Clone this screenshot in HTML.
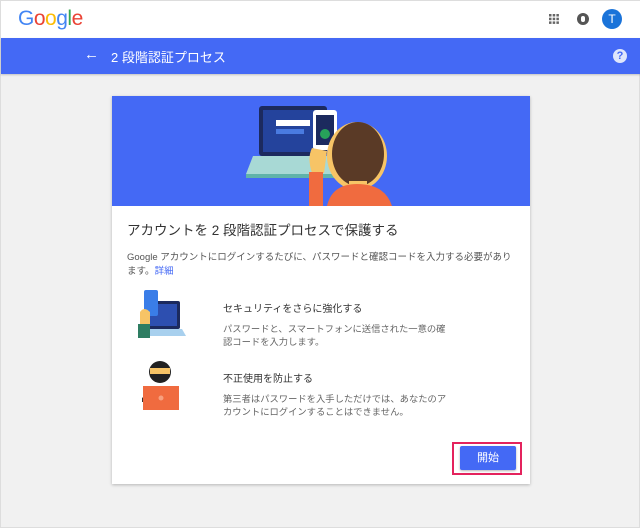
<!DOCTYPE html>
<html><head><meta charset="utf-8"><style>
*{margin:0;padding:0;box-sizing:border-box}
body{width:640px;height:528px;background:#f1f1f1;font-family:"Liberation Sans","Noto Sans CJK JP",sans-serif;position:relative;overflow:hidden;border:1px solid #ddd}
.hdr{position:absolute;left:0;top:0;width:640px;height:37px;background:#fff}
.bar{position:absolute;left:0;top:37px;width:640px;height:36px;background:#4469f5;box-shadow:0 1px 2px rgba(0,0,0,.2)}
.card{position:absolute;left:111px;top:95px;width:418px;height:388px;background:#fff;box-shadow:0 1px 3px rgba(0,0,0,.25)}
.t{position:absolute;white-space:nowrap}
</style></head><body>
<div class="hdr">
<div class="t" style="left:17px;top:6px;font-size:21px;letter-spacing:-0.5px"><span style="color:#4285f4">G</span><span style="color:#ea4335">o</span><span style="color:#fbbc05">o</span><span style="color:#4285f4">g</span><span style="color:#34a853">l</span><span style="color:#ea4335">e</span></div>
<svg style="position:absolute;left:548px;top:13px" width="10" height="10"><g fill="#666"><rect x="0" y="0" width="2.5" height="2.5"/><rect x="3.7" y="0" width="2.5" height="2.5"/><rect x="7.4" y="0" width="2.5" height="2.5"/><rect x="0" y="3.7" width="2.5" height="2.5"/><rect x="3.7" y="3.7" width="2.5" height="2.5"/><rect x="7.4" y="3.7" width="2.5" height="2.5"/><rect x="0" y="7.4" width="2.5" height="2.5"/><rect x="3.7" y="7.4" width="2.5" height="2.5"/><rect x="7.4" y="7.4" width="2.5" height="2.5"/></g></svg>
<div style="position:absolute;left:576px;top:12px;width:12px;height:12px;border-radius:50%;background:#555"><div style="margin:3px 0 0 4px;width:4px;height:6px;border-radius:2px;background:#fff"></div></div>
<div style="position:absolute;left:601px;top:8px;width:20px;height:20px;border-radius:50%;background:#1a73d9;color:#fff;font-size:12px;text-align:center;line-height:20px">T</div>
</div>
<div class="bar">
<div class="t" style="left:83px;top:8px;color:#fff;font-size:15px">←</div>
<div class="t" style="left:110px;top:9px;color:#fff;font-size:13px">2 段階認証プロセス</div>
<div style="position:absolute;left:612px;top:11px;width:14px;height:14px;border-radius:50%;background:#dfe6fb;color:#4469f5;font-size:11px;font-weight:bold;text-align:center;line-height:14px">?</div>
</div>
<div class="card">
<svg width="418" height="110" style="position:absolute;left:0;top:0">
<rect width="418" height="110" fill="#4469f5"/>
<rect x="147" y="10" width="68" height="50" rx="3" fill="#1c2a5e"/>
<rect x="151" y="14" width="60" height="42" fill="#24439c"/>
<rect x="164" y="24" width="34" height="6" fill="#fff"/>
<rect x="164" y="33" width="28" height="5" fill="#4a7be0"/>
<polygon points="141,60 221,60 228,78 134,78" fill="#a8d9d5"/>
<rect x="134" y="78" width="94" height="4" fill="#5fb3aa"/>
<rect x="201" y="14" width="24" height="40" rx="3" fill="#fff"/>
<rect x="204" y="19" width="18" height="30" fill="#1c2a5e"/>
<circle cx="213" cy="38" r="5" fill="#27a35a"/>
<path d="M200 52 q-5 10 0 25 l12 0 l3 -22 z" fill="#f7c466"/>
<rect x="197" y="76" width="14" height="34" fill="#f06b3f"/>
<ellipse cx="245" cy="60" rx="30" ry="34" fill="#f7c466"/>
<ellipse cx="246" cy="58" rx="26" ry="32" fill="#5a3a26"/>
<rect x="237" y="85" width="18" height="10" fill="#f7c466"/>
<path d="M215 110 q5 -22 30 -22 q28 0 35 22 z" fill="#f06b3f"/>
</svg>
<div class="t" style="left:15px;top:123px;font-size:13.5px;color:#333">アカウントを 2 段階認証プロセスで保護する</div>
<div class="t" style="left:15px;top:155px;font-size:9.5px;color:#555;line-height:14px">Google アカウントにログインするたびに、パスワードと確認コードを入力する必要があり<br>ます。<span style="color:#4469f5">詳細</span></div>
<svg width="60" height="60" style="position:absolute;left:22px;top:192px">
<rect x="10" y="13" width="36" height="28" rx="2" fill="#1c2a5e"/><rect x="13" y="16" width="30" height="22" fill="#2d4fb0"/>
<polygon points="8,41 48,41 52,48 4,48" fill="#a8d0ee"/>
<rect x="10" y="2" width="14" height="26" rx="2" fill="#3a7de8"/>
<path d="M6 24 q4 -6 10 0 l0 12 l-10 0 z" fill="#f7c466"/>
<rect x="4" y="36" width="12" height="14" fill="#2e7d62"/>
</svg>
<svg width="60" height="60" style="position:absolute;left:22px;top:262px">
<circle cx="26" cy="14" r="11" fill="#222"/><rect x="16" y="10" width="20" height="6" fill="#f7c466"/>
<path d="M8 40 q18 -16 36 0 v4 h-36z" fill="#333"/>
<rect x="9" y="28" width="36" height="24" fill="#f06b3f"/><circle cx="27" cy="40" r="2.5" fill="#f7a07f"/>
</svg>
<div class="t" style="left:111px;top:204px;font-size:10px;color:#333">セキュリティをさらに強化する</div>
<div class="t" style="left:111px;top:227px;font-size:9.3px;color:#666;line-height:13px">パスワードと、スマートフォンに送信された一意の確<br>認コードを入力します。</div>
<div class="t" style="left:111px;top:274px;font-size:10px;color:#333">不正使用を防止する</div>
<div class="t" style="left:111px;top:297px;font-size:9.3px;color:#666;line-height:13px">第三者はパスワードを入手しただけでは、あなたのア<br>カウントにログインすることはできません。</div>
<div style="position:absolute;left:340px;top:346px;width:70px;height:33px;border:2px solid #e4235d"></div>
<div style="position:absolute;left:348px;top:350px;width:56px;height:24px;background:#4469f5;border-radius:2px;box-shadow:0 1px 2px rgba(0,0,0,.3);color:#fff;font-size:11px;text-align:center;line-height:24px">開始</div>
</div>
</body></html>
